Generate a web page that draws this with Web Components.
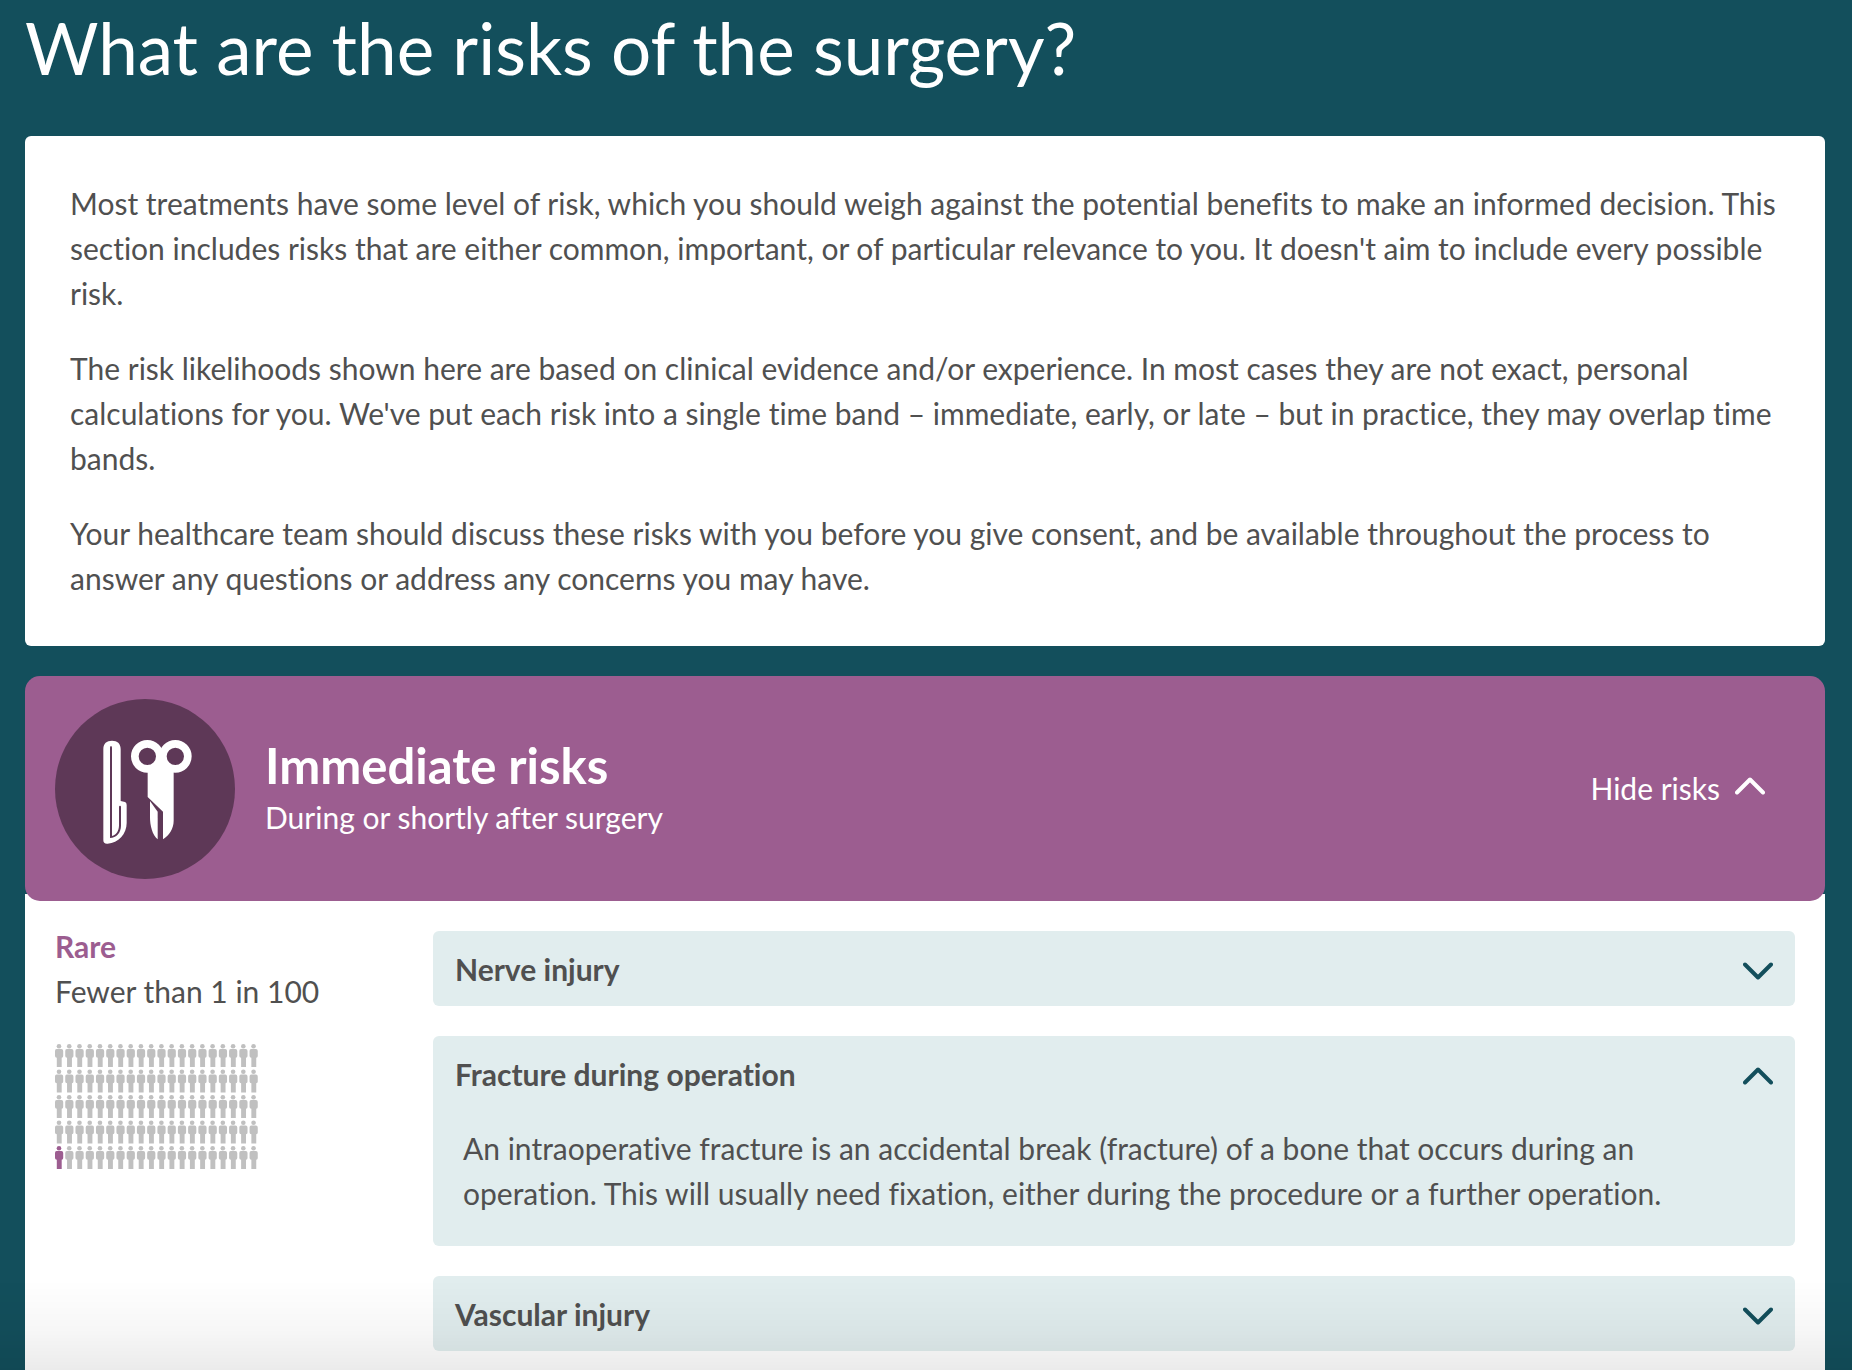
<!DOCTYPE html>
<html lang="en">
<head>
<meta charset="utf-8">
<meta name="viewport" content="width=device-width, initial-scale=1">
<title>What are the risks of the surgery?</title>
<style>
    html {
        --teal: #134f5c;
        --purple: #9c5d90;
        --purple-dark: #5e3857;
        --pale: #e1edee;
        --text: #505050;
        --person: #c0c0c0;
    }
    body {
        margin: 0;
        background-color: var(--teal);
        color: var(--text);
        font-family: Lato, "Liberation Sans", sans-serif;
        font-size: 30px;
        font-variant-ligatures: none;
        line-height: 45px;
    }
    p {
        margin: 0;
    }
</style>
</head>
<body>
<risk-page>
    <span slot="title">What are the risks of the surgery?</span>
    <info-card>
        <p>Most treatments have some level of risk, which you should weigh against the potential benefits to make an informed decision. This section includes risks that are either common, important, or of particular relevance to you. It doesn't aim to include every possible risk.</p>
        <p>The risk likelihoods shown here are based on clinical evidence and/or experience. In most cases they are not exact, personal calculations for you. We've put each risk into a single time band – immediate, early, or late – but in practice, they may overlap time bands.</p>
        <p>Your healthcare team should discuss these risks with you before you give consent, and be available throughout the process to answer any questions or address any concerns you may have.</p>
    </info-card>
    <risk-section>
        <surgery-icon slot="icon"></surgery-icon>
        <span slot="title">Immediate risks</span>
        <span slot="subtitle">During or shortly after surgery</span>
        <risk-group>
            <span slot="level">Rare</span>
            <span slot="chance">Fewer than 1 in 100</span>
            <people-chart slot="chart" affected="1"></people-chart>
            <risk-item>
                <span slot="title">Nerve injury</span>
            </risk-item>
            <risk-item open>
                <span slot="title">Fracture during operation</span>
                <p>An intraoperative fracture is an accidental break (fracture) of a bone that occurs during an operation. This will usually need fixation, either during the procedure or a further operation.</p>
            </risk-item>
            <risk-item>
                <span slot="title">Vascular injury</span>
            </risk-item>
        </risk-group>
    </risk-section>
</risk-page>

<script>
class RiskPage extends HTMLElement {

    constructor() {
        super();
        this.attachShadow({mode: "open"}).innerHTML = `
        <style>
            :host {
                display: flex;
                flex-direction: column;
                gap: 30px;
                box-sizing: border-box;
                min-height: 100vh;
                padding: 5px 27px 0 25px;
            }
            h1 {
                margin: 0 0 15px;
                color: white;
                font-size: 71px;
                font-weight: normal;
                line-height: 86px;
            }
            /* shade along the bottom edge of the window */
            .shade {
                position: fixed;
                left: 0;
                right: 0;
                bottom: 0;
                height: 90px;
                background: linear-gradient(to bottom, rgba(0, 0, 0, 0), rgba(0, 0, 0, 0.03) 55%, rgba(0, 0, 0, 0.08));
                pointer-events: none;
            }
        </style>
        <h1><slot name="title"></slot></h1>
        <slot></slot>
        <div class="shade"></div>
        `;
    }
}

class InfoCard extends HTMLElement {

    constructor() {
        super();
        this.attachShadow({mode: "open"}).innerHTML = `
        <style>
            :host {
                display: flex;
                flex-direction: column;
                gap: 30px;
                padding: 45px;
                border-radius: 6px;
                background-color: white;
            }
        </style>
        <slot></slot>
        `;
    }
}

class ChevronIcon extends HTMLElement {

    constructor() {
        super();
        this.attachShadow({mode: "open"}).innerHTML = `
        <style>
            :host {
                display: block;
                flex: none;
                width: 30px;
                height: 18px;
            }
            :host([up]) {
                transform: rotate(180deg);
            }
            svg {
                display: block;
            }
        </style>
        <svg width="30" height="18" viewBox="0 0 30 18" fill="none" stroke="currentColor" stroke-width="4" stroke-linecap="round" stroke-linejoin="round" aria-hidden="true">
            <path d="M2 2.5 15 15.5 28 2.5"/>
        </svg>
        `;
    }
}

class SurgeryIcon extends HTMLElement {

    constructor() {
        super();
        this.attachShadow({mode: "open"}).innerHTML = `
        <style>
            :host {
                display: block;
                flex: none;
                width: 180px;
                height: 180px;
            }
            svg {
                display: block;
                width: 100%;
                height: 100%;
            }
            .disc, .line {
                fill: var(--purple-dark);
            }
        </style>
        <svg viewBox="0 0 540 540" fill="white" aria-hidden="true">
            <circle class="disc" cx="270" cy="270" r="270"/>
            <!-- scalpel -->
            <path d="M145 150C145 133 155 125 171 125C187 125 197 133 197 150V306L210 309Q215 311 215 318V372C215 405 190 432 158 434Q145 435 145 424Z"/>
            <path class="line" d="M165 146Q165 141 168 141Q171 141 171 146V411C183 409 192 396 192 379V324Q192 320 195 320Q198 320 198 324V380C198 401 184 416 165 417Z"/>
            <!-- scissors -->
            <path fill-rule="evenodd" d="M277 123A49 49 0 1 0 277 221A49 49 0 1 0 277 123ZM277 146A26 26 0 1 1 277 198A26 26 0 1 1 277 146Z"/>
            <path fill-rule="evenodd" d="M361 123A49 49 0 1 0 361 221A49 49 0 1 0 361 123ZM361 146A26 26 0 1 1 361 198A26 26 0 1 1 361 146Z"/>
            <path d="M278 219Q300 213 319 190Q338 213 356 219V365C356 390 342 409 324 421V338L278 294Z"/>
            <path d="M285 306L308 338V421C292 409 285 380 285 355Z"/>
        </svg>
        `;
    }
}

class PeopleChart extends HTMLElement {

    connectedCallback() {
        this.render();
    }

    render() {
        const affected = Number(this.getAttribute("affected"));
        let people = "";
        for (let row = 0; row < 5; row++) {
            for (let col = 0; col < 20; col++) {
                // counted from the bottom row up
                const index = (4 - row) * 20 + col;
                const x = (col * 10.24).toFixed(2);
                const y = (row * 25.5).toFixed(1);
                people += `<use href="#person" x="${x}" y="${y}"${index < affected ? ' class="affected"' : ""}/>`;
            }
        }
        const root = this.shadowRoot || this.attachShadow({mode: "open"});
        root.innerHTML = `
        <style>
            :host {
                display: block;
            }
            svg {
                display: block;
                fill: var(--person);
            }
            .affected {
                fill: var(--purple);
            }
        </style>
        <svg width="203" height="125" viewBox="0 0 203 125" role="img" aria-label="${affected} in 100 people">
            <defs>
                <g id="person">
                    <circle cx="4" cy="2.3" r="2.3"/>
                    <path d="M1.6 5H6.4Q8.2 5.2 8.2 7V12Q8.2 13.4 6.7 13.8V23H1.8V13.8Q0 13.4 0 12V7Q0 5.2 1.6 5Z"/>
                </g>
            </defs>
            ${people}
        </svg>
        `;
    }
}

class RiskSection extends HTMLElement {

    constructor() {
        super();
        this.attachShadow({mode: "open"}).innerHTML = `
        <style>
            :host {
                display: flex;
                flex-direction: column;
                flex: 1;
            }
            header {
                display: flex;
                align-items: center;
                gap: 30px;
                position: relative;
                padding: 23px 60px 22px 30px;
                border-radius: 15px;
                background-color: var(--purple);
                color: white;
            }
            .heading {
                flex: 1;
                padding-bottom: 3px;
            }
            h2 {
                margin: 0;
                font-size: 49px;
                line-height: 60px;
            }
            button {
                display: flex;
                align-items: center;
                gap: 15px;
                padding: 0 0 2px;
                border: 0;
                background: none;
                color: inherit;
                font: inherit;
                cursor: pointer;
            }
            chevron-icon {
                margin-bottom: 5px;
            }
            /* tucks under the rounded corners of the header */
            .content {
                flex: 1;
                margin-top: -7px;
                padding: 30px 30px 15px;
                background-color: white;
            }
            .content[hidden] {
                display: none;
            }
        </style>
        <header>
            <slot name="icon"></slot>
            <div class="heading">
                <h2><slot name="title"></slot></h2>
                <slot name="subtitle"></slot>
            </div>
            <button type="button" aria-expanded="true" aria-controls="content">
                <span>Hide risks</span>
                <chevron-icon up></chevron-icon>
            </button>
        </header>
        <div class="content" id="content"><slot></slot></div>
        `;
        this.shadowRoot.querySelector("button").addEventListener("click", () => this.toggle());
    }

    toggle() {
        const button = this.shadowRoot.querySelector("button");
        const content = this.shadowRoot.querySelector(".content");
        content.hidden = !content.hidden;
        button.setAttribute("aria-expanded", String(!content.hidden));
        button.querySelector("span").textContent = content.hidden ? "Show risks" : "Hide risks";
        button.querySelector("chevron-icon").toggleAttribute("up", !content.hidden);
    }
}

class RiskGroup extends HTMLElement {

    constructor() {
        super();
        this.attachShadow({mode: "open"}).innerHTML = `
        <style>
            :host {
                display: grid;
                grid-template-columns: 348px 1fr;
                gap: 30px;
            }
            h3 {
                margin: 0;
                color: var(--purple);
                font-size: 30px;
                line-height: 45px;
            }
            .chance {
                margin-bottom: 30px;
            }
            .items {
                display: flex;
                flex-direction: column;
                gap: 30px;
                padding-top: 7px;
            }
            @media screen and (max-width: 900px) {
                :host {
                    grid-template-columns: 1fr;
                }
            }
        </style>
        <div>
            <h3><slot name="level"></slot></h3>
            <div class="chance"><slot name="chance"></slot></div>
            <slot name="chart"></slot>
        </div>
        <div class="items"><slot></slot></div>
        `;
    }
}

class RiskItem extends HTMLElement {

    static get observedAttributes() {
        return ["open"];
    }

    constructor() {
        super();
        this.attachShadow({mode: "open"}).innerHTML = `
        <style>
            :host {
                display: block;
                border-radius: 6px;
                background-color: var(--pale);
            }
            h4 {
                margin: 0;
            }
            button {
                display: flex;
                align-items: center;
                justify-content: space-between;
                width: 100%;
                padding: 16px 22px 14px;
                border: 0;
                background: none;
                color: inherit;
                font: inherit;
                text-align: left;
                cursor: pointer;
            }
            chevron-icon {
                margin-top: 2px;
                color: var(--teal);
            }
            .details {
                padding: 15px 30px 30px;
            }
            .details[hidden] {
                display: none;
            }
        </style>
        <h4>
            <button type="button" aria-expanded="false" aria-controls="details">
                <slot name="title"></slot>
                <chevron-icon></chevron-icon>
            </button>
        </h4>
        <div class="details" id="details" hidden><slot></slot></div>
        `;
        this.shadowRoot.querySelector("button").addEventListener("click", () => this.toggleAttribute("open"));
    }

    attributeChangedCallback() {
        const open = this.hasAttribute("open");
        this.shadowRoot.querySelector("button").setAttribute("aria-expanded", String(open));
        this.shadowRoot.querySelector("chevron-icon").toggleAttribute("up", open);
        this.shadowRoot.querySelector(".details").hidden = !open;
    }
}

customElements.define("chevron-icon", ChevronIcon);
customElements.define("surgery-icon", SurgeryIcon);
customElements.define("people-chart", PeopleChart);
customElements.define("risk-item", RiskItem);
customElements.define("risk-group", RiskGroup);
customElements.define("risk-section", RiskSection);
customElements.define("info-card", InfoCard);
customElements.define("risk-page", RiskPage);
</script>
</body>
</html>
